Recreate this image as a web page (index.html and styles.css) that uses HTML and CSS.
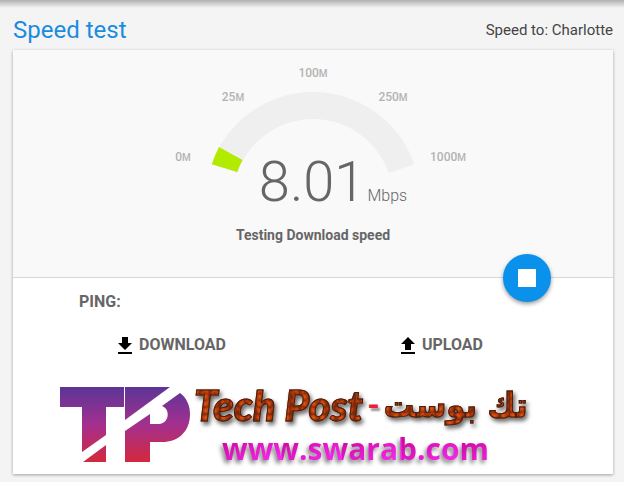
FILE: index.html
```html
<!DOCTYPE html>
<html lang="en">
<head>
  <meta charset="UTF-8">
  <meta name="viewport" content="width=device-width, initial-scale=1">
  <title>Speed test</title>
  <link rel="stylesheet" href="styles.css">
</head>
<body>
  <header class="page-header">
    <h1>Speed test</h1>
    <span class="server">Speed to: Charlotte</span>
  </header>

  <main class="card">
    <section class="meter">
      <svg class="gauge" width="320" height="160" viewBox="0 0 320 160">
        <path fill="#efefef" d="M58.800 114.300A107 107 0 0 1 261.200 114.300L235.700 123.100A80 80 0 0 0 84.300 123.100Z"/>
        <path fill="#b2eb00" d="M58.800 114.300A107 107 0 0 1 66 97L89.500 110A80 80 0 0 0 84.300 122Z"/>
        <g class="scale">
          <text x="30" y="111">0<tspan>M</tspan></text>
          <text x="80" y="51">25<tspan>M</tspan></text>
          <text x="160" y="27">100<tspan>M</tspan></text>
          <text x="240" y="51">250<tspan>M</tspan></text>
          <text x="295" y="111">1000<tspan>M</tspan></text>
        </g>
      </svg>
      <div class="reading"><span class="value">8.01</span><span class="unit">Mbps</span></div>
      <p class="status">Testing Download speed</p>
      <button class="stop" type="button" aria-label="Stop"><span></span></button>
    </section>

    <section class="results">
      <div class="ping">PING:</div>
      <div class="transfers">
        <div class="transfer">
          <svg width="14" height="17" viewBox="0 0 14 17"><path d="M4 0h6v6h4l-7 7-7-7h4zM0 15h14v2H0z"/></svg>
          DOWNLOAD
        </div>
        <div class="transfer">
          <svg width="14" height="17" viewBox="0 0 14 17"><path d="M7 0l7 7h-4v6H4V7H0zM0 15h14v2H0z"/></svg>
          UPLOAD
        </div>
      </div>
    </section>

    <footer class="brand">
      <svg class="logo" width="130" height="75" viewBox="0 0 130 75">
        <defs>
          <linearGradient id="tp" x1="0" y1="0" x2="0" y2="75" gradientUnits="userSpaceOnUse">
            <stop offset="0" stop-color="#5b3596"/>
            <stop offset=".5" stop-color="#a3308f"/>
            <stop offset="1" stop-color="#d5283c"/>
          </linearGradient>
        </defs>
        <g fill="url(#tp)">
          <path d="M0 0H64V20H46V48L22 65V20H0Z"/>
          <path d="M46 58V75H23Z"/>
          <path d="M65 0H110L65 33Z"/>
          <path d="M65 44L90 27V37H99C109 37 111 22 102 19L120 6C127 11 130 19 130 27C130 45 118 55 102 55H90V75H65Z"/>
        </g>
      </svg>
      <div class="brand-text">
        <div class="brand-name">
          <span class="lava latin">Tech Post</span>
          <span class="dash">-</span>
          <span class="lava arabic" lang="ar" dir="rtl">تك بوست</span>
        </div>
        <a class="site" href="#">www.swarab.com</a>
      </div>
    </footer>
  </main>
</body>
</html>
```
FILE: styles.css
```css
* {
  box-sizing: border-box;
}

body {
  margin: 0;
  padding: 0 11px 10px 13px;
  font-family: Roboto, "Liberation Sans", sans-serif;
  color: #666;
  background: #f4f4f4 linear-gradient(#b0b0b0, #f4f4f4 8px) no-repeat;
}

.page-header {
  display: flex;
  justify-content: space-between;
  align-items: center;
  height: 50px;
  padding-top: 10px;
}

h1 {
  margin: 0;
  font-size: 24px;
  font-weight: 400;
  color: #1a8ce0;
}

.server {
  font-size: 15px;
  color: #444;
}

.card {
  background: #fff;
  box-shadow: 0 1px 3px rgba(0, 0, 0, 0.35);
}

.meter {
  position: relative;
  display: flex;
  flex-direction: column;
  align-items: center;
  height: 228px;
  background: #f9f9f9;
  border-bottom: 1px solid #d8d8d8;
}

.gauge {
  display: block;
}

.scale {
  font-size: 12px;
  font-weight: 500;
  text-anchor: middle;
  fill: #b3b3b3;
}

.scale tspan {
  font-size: 10px;
}

.reading {
  display: flex;
  align-items: baseline;
  gap: 2px;
  margin-top: -60px;
  padding-left: 40px;
  line-height: 64px;
}

.value {
  font-size: 56px;
  font-weight: 300;
}

.unit {
  font-size: 16px;
  font-weight: 300;
}

.status {
  margin: 0;
  font-size: 14px;
  font-weight: 700;
  line-height: 14px;
}

.stop {
  position: absolute;
  right: 62px;
  bottom: -25px;
  display: flex;
  align-items: center;
  justify-content: center;
  width: 48px;
  height: 48px;
  padding: 0;
  border: none;
  border-radius: 50%;
  background: #0991eb;
  box-shadow: 0 2px 4px rgba(0, 0, 0, 0.4);
  cursor: pointer;
}

.stop span {
  width: 18px;
  height: 18px;
  background: #fff;
}

.results {
  padding: 14px 36px 0 24px;
  font-size: 16px;
  font-weight: 700;
  line-height: 20px;
}

.ping {
  padding-left: 42px;
}

.transfers {
  display: grid;
  grid-template-columns: 1fr 1fr;
  margin-top: 23px;
}

.transfer {
  display: flex;
  align-items: center;
  justify-content: center;
  gap: 7px;
}

.transfer svg {
  fill: #000;
}

.brand {
  display: flex;
  padding: 24px 47px 7px;
}

.logo {
  flex: none;
  margin-top: 8px;
}

.brand-text {
  flex: 1;
  padding-left: 4px;
  font-weight: 700;
  white-space: nowrap;
}

.brand-name {
  display: flex;
  align-items: center;
  gap: 4px;
  height: 52px;
}

.lava {
  color: transparent;
  background:
    radial-gradient(circle at 30% 40%, #f0560f, transparent 4px) 0 0 / 9px 7px,
    radial-gradient(circle at 70% 60%, #c23a0c, transparent 3px) 0 0 / 5px 8px,
    #7a2a0c;
  -webkit-background-clip: text;
  background-clip: text;
  -webkit-text-stroke: 1px #48200e;
  filter: drop-shadow(2px 3px 2px rgba(0, 0, 0, 0.6));
}

.latin {
  font-family: Lato, sans-serif;
  font-size: 42px;
  font-style: italic;
  font-weight: 900;
}

.arabic {
  font-family: "DejaVu Sans Condensed", "DejaVu Sans", sans-serif;
  font-size: 34px;
}

.dash {
  font-size: 32px;
  color: #e8203c;
  text-shadow: 2px 3px 2px #999;
}

.site {
  display: block;
  margin-left: 28px;
  font-family: "Open Sans", sans-serif;
  font-size: 30px;
  line-height: 36px;
  text-decoration: none;
  color: transparent;
  background: linear-gradient(160deg, #c4008c, #ff30ff) 0 0 / 60px 100%;
  -webkit-background-clip: text;
  background-clip: text;
  filter: drop-shadow(-2px 3px 2px rgba(0, 0, 0, 0.5));
}
```
